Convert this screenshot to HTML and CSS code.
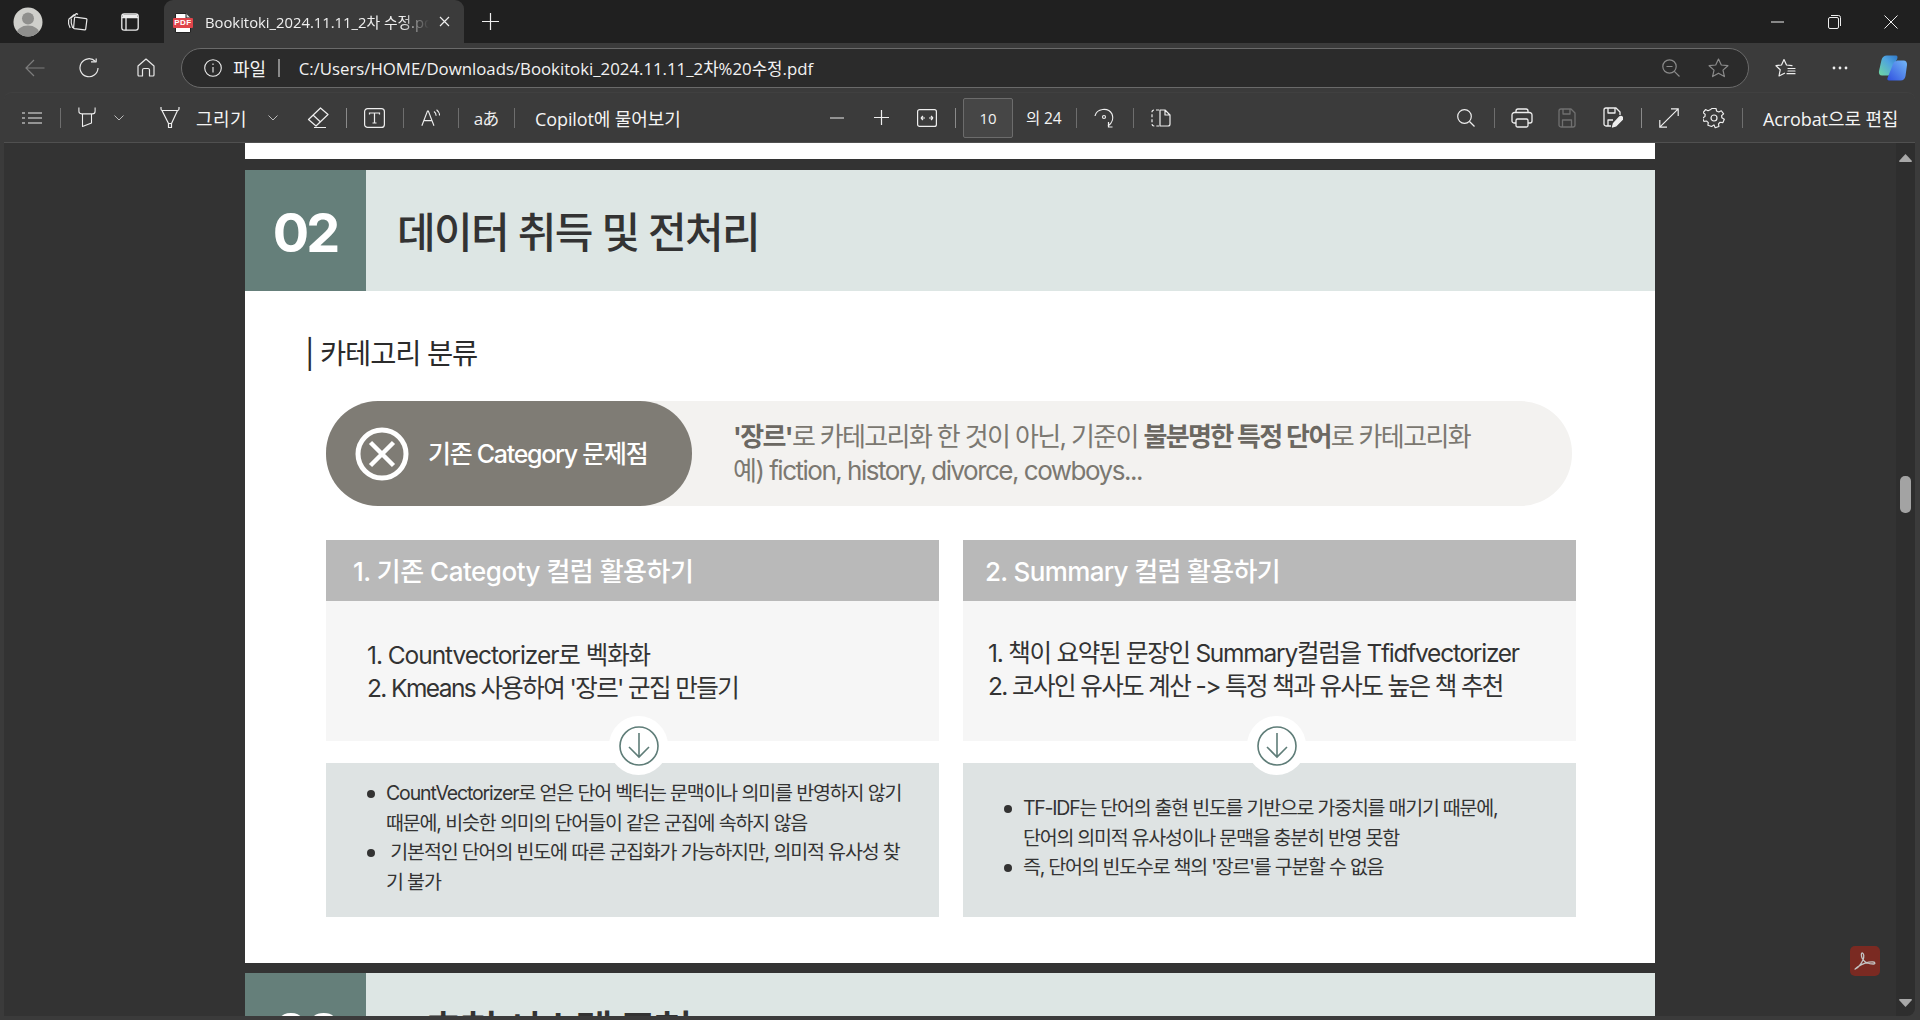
FILE: index.html
```html
<!DOCTYPE html>
<html lang="ko">
<head>
<meta charset="utf-8">
<title>Bookitoki_2024.11.11_2차 수정.pdf</title>
<link rel="stylesheet" href="styles.css">
</head>
<body>
<div class="window">
  <header class="tabstrip">
    <div class="slot s44 first-tabslot">
      <svg class="avatar" width="30" height="30" viewBox="0 0 30 30"><defs><clipPath id="av"><circle cx="15" cy="15" r="14.5"/></clipPath></defs><circle cx="15" cy="15" r="14.5" fill="#cfcfcb"/><g clip-path="url(#av)" fill="#8f8f8d"><circle cx="15" cy="11.5" r="6"/><ellipse cx="15" cy="27" rx="11.5" ry="8.5"/></g></svg>
    </div>
    <div class="slot s56">
      <svg width="22" height="22" viewBox="0 0 22 22" fill="none" stroke="#e8e8e8" stroke-width="1.2" stroke-linejoin="round"><path d="M4.5 6.5 9.5 2.5l1.5 1M1.5 8.5 7 3.8l1.5 1"/><path d="M1.6 8.6c-.5 3 .2 6 1.6 8.4M4.3 7.4c-.6 3.5 0 6.5 1.4 9.5"/><path d="M8.5 6.2l10.6 1.4c.6.1.9.6.8 1.1l-1.2 9.4c-.1.5-.6.9-1.1.8L7.4 17.7c-.5-.1-.9-.6-.8-1.1l.9-9.6c.1-.5.5-.9 1-.8z"/></svg>
    </div>
    <div class="slot s48">
      <svg width="18" height="18" viewBox="0 0 18 18" fill="none" stroke="#ececec" stroke-width="1.3"><rect x=".8" y=".8" width="16.4" height="16.4" rx="2.4"/><path d="M.8 4.6h16.4M5 4.6v12.6"/><path d="M1.5 1.5h15v3h-15z" fill="#ececec" stroke="none"/></svg>
    </div>
    <div class="tab">
      <svg class="pdf-icon" width="20" height="20" viewBox="0 0 20 20"><path d="M2.500.5h10.500l4.500 4.500v14.500h-15z" fill="#fff" stroke="#222" stroke-width="1"/><path d="M13 .5V5h4.500" fill="#ddd" stroke="#222" stroke-width="1"/><rect y="5" width="20" height="10" rx="1" fill="#e0444a"/></svg>
      <span class="pdf-mark">PDF</span>
      <span class="tab-title">Bookitoki_2024.11.11_2차 수정.pdf</span>
      <svg class="tab-close" width="11" height="11" viewBox="0 0 11 11" stroke="#eee" stroke-width="1.2"><path d="M1 1l9 9M10 1l-9 9"/></svg>
    </div>
    <div class="slot s52">
      <svg width="17" height="17" viewBox="0 0 17 17" stroke="#eee" stroke-width="1.2"><path d="M8.500 0v17M0 8.500h17"/></svg>
    </div>
    <div class="win-controls">
      <div class="slot s56"><svg width="13" height="2" viewBox="0 0 13 2" stroke="#eee" stroke-width="1"><path d="M0 1h13"/></svg></div>
      <div class="slot s56"><svg width="13" height="14" viewBox="0 0 13 14" fill="none" stroke="#eee" stroke-width="1"><rect x=".5" y="2.500" width="10" height="11" rx="1.500"/><path d="M3 .5h7.500a2 2 0 0 1 2 2V11"/></svg></div>
      <div class="slot s56"><svg width="14" height="14" viewBox="0 0 14 14" stroke="#eee" stroke-width="1"><path d="M.5.5l13 13M13.500.5l-13 13"/></svg></div>
    </div>
  </header>

  <div class="addressbar">
    <div class="slot s56">
      <svg width="20" height="18" viewBox="0 0 20 18" fill="none" stroke="#7d7d7d" stroke-width="1.2"><path d="M19.500 9H1M9 1 1 9l8 8"/></svg>
    </div>
    <div class="slot s52">
      <svg width="20" height="20" viewBox="0 0 20 20" fill="none" stroke="#e8e8e8" stroke-width="1.200"><path d="M16.500 3.500A9 9 0 1 0 19 10"/><path d="M12 3.800h5.200V.5" stroke-linejoin="round"/></svg>
    </div>
    <div class="slot s62">
      <svg width="18" height="19" viewBox="0 0 18 19" fill="none" stroke="#e8e8e8" stroke-width="1.200" stroke-linejoin="round"><path d="M1 8 9 1l8 7v9a1 1 0 0 1-1 1h-3.500v-6a1.500 1.500 0 0 0-1.500-1.500H7a1.500 1.500 0 0 0-1.500 1.500v6H2a1 1 0 0 1-1-1z"/></svg>
    </div>
    <div class="omnibox">
      <svg class="info" width="18" height="18" viewBox="0 0 18 18" fill="none" stroke="#eee" stroke-width="1.100"><circle cx="9" cy="9" r="8.300"/><path d="M9 8v5.500M9 4.500v1.400"/></svg>
      <span class="origin">파일</span>
      <span class="omni-sep"></span>
      <span class="url">C:/Users/HOME/Downloads/Bookitoki_2024.11.11_2차%20수정.pdf</span>
      <div class="omni-actions">
        <div class="slot s50">
          <svg width="18" height="18" viewBox="0 0 18 18" fill="none" stroke="#8a8a8a" stroke-width="1.200"><circle cx="7.500" cy="7.500" r="6.700"/><path d="M12.300 12.300l5.200 5.200M4.500 7.500h6"/></svg>
        </div>
        <div class="slot s44">
          <svg width="21" height="20" viewBox="0 0 21 20" fill="none" stroke="#8a8a8a" stroke-width="1.200" stroke-linejoin="round"><path d="M10.500 1l2.800 6 6.600.7-4.900 4.400 1.400 6.500-5.900-3.400-5.900 3.400 1.400-6.500L1.100 7.700l6.600-.7z"/></svg>
        </div>
      </div>
    </div>
    <div class="slot s44 ml14">
      <svg width="21" height="20" viewBox="0 0 21 20" fill="none" stroke="#eee" stroke-width="1.200" stroke-linejoin="round" stroke-linecap="round"><path d="M17 7.600 11.500 7 9 1.500 6.500 7 1 7.700l4.200 4.100L4 18l5.500-2.800"/><path d="M13 10.500h7M13 13h7M12 15.700h8"/></svg>
    </div>
    <div class="slot s44 ml11">
      <svg width="16" height="4" viewBox="0 0 16 4" fill="#eee"><circle cx="2" cy="2" r="1.400"/><circle cx="8" cy="2" r="1.400"/><circle cx="14" cy="2" r="1.400"/></svg>
    </div>
    <div class="slot s44 ml9">
      <svg width="30" height="30" viewBox="0 0 30 30"><defs><linearGradient id="cpA" x1="0" y1="1" x2="1" y2="0"><stop offset="0" stop-color="#6fd8a0"/><stop offset=".6" stop-color="#4fa3e0"/><stop offset="1" stop-color="#2f78c8"/></linearGradient><linearGradient id="cpB" x1="0" y1="1" x2="1" y2="0"><stop offset="0" stop-color="#2f50e0"/><stop offset="1" stop-color="#74b8f5"/></linearGradient></defs><path d="M9 2.500h9c1.500 0 1.800 1.500 1.300 3l-6 15c-.5 1.200-1.500 2-3 2H4c-2.500 0-3.500-2-3-4.500l2.500-11C4.300 4 6 2.500 9 2.500z" fill="url(#cpA)"/><path d="M19 7.500h6.500c2.500 0 3.800 2 3.500 4.500l-1.500 11c-.4 2.500-2 4.500-5 4.500H11c-1.500 0-2-1.200-1.500-2.500l6-15c.6-1.300 1.800-2 3.500-2z" fill="url(#cpB)"/></svg>
    </div>
  </div>

  <div class="pdfbar">
    <div class="bar-left">
      <div class="slot s44">
        <svg width="20" height="14" viewBox="0 0 20 14" stroke="#eee" stroke-width="1.200"><path d="M6 2h14M6 7h14M6 12h14M0 2h3M0 7h3M0 12h3"/></svg>
      </div>
      <span class="sep"></span>
      <div class="slot s42">
        <svg width="18" height="21" viewBox="0 0 20 22" fill="none" stroke="#eee" stroke-width="1.200" stroke-linejoin="round"><path d="M1 0v4c0 2 1 3 3 3h12c2 0 3-1 3-3V0M5 7v14l10-4V7"/></svg>
      </div>
      <div class="slot s22">
        <svg width="10" height="6" viewBox="0 0 10 6" fill="none" stroke="#bbb" stroke-width="1"><path d="M.5.5 5 5 9.500.5"/></svg>
      </div>
      <div class="slot s40 ml20">
        <svg width="20" height="22" viewBox="0 0 20 22" fill="none" stroke="#eee" stroke-width="1.200" stroke-linejoin="round"><path d="M1 0v2c0 1 .5 1.500 1.500 1.500h15c1 0 1.500-.5 1.500-1.500V0M2 3.500l6.500 13v4h3v-4l6-13M8.500 16.500h3"/></svg>
      </div>
      <span class="bar-text ml6 draw-label">그리기</span>
      <div class="slot s22 ml14">
        <svg width="10" height="6" viewBox="0 0 10 6" fill="none" stroke="#bbb" stroke-width="1"><path d="M.5.5 5 5 9.500.5"/></svg>
      </div>
      <div class="slot s44 ml12">
        <svg width="22" height="21" viewBox="0 0 22 21" fill="none" stroke="#eee" stroke-width="1.200" stroke-linejoin="round"><path d="M13.500 1 21 7.500 9 19l-7.500-6.500zM6 8l7.500 7M7 20.500h12"/></svg>
      </div>
      <span class="sep sep-strong"></span>
      <div class="slot s45">
        <svg width="21" height="20" viewBox="0 0 21 20" fill="none" stroke="#eee" stroke-width="1.200"><rect x=".6" y=".6" width="19.800" height="18.800" rx="3"/><path d="M5.500 6.500V5h10v1.500M10.500 5v10M8.500 15h4"/></svg>
      </div>
      <span class="sep"></span>
      <div class="slot s43">
        <svg width="19" height="18" viewBox="0 0 22 20" fill="none" stroke="#eee" stroke-width="1.300"><path d="M1 19 7.500 2h1L15 19M3.500 13h9.500"/><path d="M15 2.500c1.500 1 2.500 3 2.500 5M18 .5c2 1.500 3.500 4 3.500 6.500"/></svg>
      </div>
      <span class="sep"></span>
      <span class="slot s44 aa-label">aあ</span>
      <span class="sep"></span>
      <span class="bar-text ml15">Copilot에 물어보기</span>
    </div>

    <div class="bar-center">
      <div class="slot s44"><svg width="14" height="2" viewBox="0 0 14 2" stroke="#aaa" stroke-width="1.600"><path d="M0 1h14"/></svg></div>
      <div class="slot s44"><svg width="15" height="15" viewBox="0 0 15 15" stroke="#eee" stroke-width="1.200"><path d="M7.500 0v15M0 7.500h15"/></svg></div>
      <div class="slot s48">
        <svg width="20" height="18" viewBox="0 0 20 18" fill="none" stroke="#eee" stroke-width="1.200"><rect x=".6" y=".6" width="18.800" height="16.800" rx="2"/><path d="M4 9h4M4 9l2-2M4 9l2 2M16 9h-4M16 9l-2-2M16 9l-2 2"/></svg>
      </div>
      <span class="sep sep-narrow sep-strong"></span>
      <div class="page-box">10</div>
      <span class="bar-text page-total">의 24</span>
      <span class="sep ml9"></span>
      <div class="slot s44">
        <svg width="20" height="22" viewBox="0 0 20 22" fill="none" stroke="#eee" stroke-width="1.200"><path d="M1 9a9 8 0 0 1 17-2c1.500 4 .5 9-4 12"/><path d="M14.500 15v5h4"/><circle cx="10" cy="10" r="1.500"/></svg>
      </div>
      <span class="sep ml1"></span>
      <div class="slot s44">
        <svg width="20" height="18" viewBox="0 0 20 18" fill="none" stroke="#eee" stroke-width="1.200" stroke-linejoin="round"><path d="M8 1H3a2 2 0 0 0-2 2v12a2 2 0 0 0 2 2h5" stroke-dasharray="3 2"/><path d="M9 1h5l5 5v9a2 2 0 0 1-2 2H9zM14 1v5h5"/></svg>
      </div>
    </div>

    <div class="bar-right">
      <div class="slot s44">
        <svg width="18" height="18" viewBox="0 0 18 18" fill="none" stroke="#eee" stroke-width="1.200"><circle cx="7.500" cy="7.500" r="6.800"/><path d="M12.500 12.500l5 5"/></svg>
      </div>
      <span class="sep"></span>
      <div class="slot s44">
        <svg width="22" height="20" viewBox="0 0 22 20" fill="none" stroke="#eee" stroke-width="1.300" stroke-linejoin="round"><path d="M5 5V3a2 2 0 0 1 2-2h8a2 2 0 0 1 2 2v2"/><path d="M5 15H3a2 2 0 0 1-2-2V7a2.500 2.500 0 0 1 2.500-2.500h15A2.500 2.500 0 0 1 21 7v6a2 2 0 0 1-2 2h-2"/><rect x="5" y="11" width="12" height="8" rx="1.500"/></svg>
      </div>
      <div class="slot s44 ml1">
        <svg width="18" height="20" viewBox="0 0 18 20" fill="none" stroke="#707070" stroke-width="1.300" stroke-linejoin="round"><path d="M3 1h10l4 4v12a2 2 0 0 1-2 2H3a2 2 0 0 1-2-2V3a2 2 0 0 1 2-2z"/><path d="M5 1v5h7V1M4.500 19v-7h9v7"/></svg>
      </div>
      <div class="slot s44 ml2">
        <svg width="20" height="21" viewBox="0 0 20 21" fill="none" stroke="#eee" stroke-width="1.300" stroke-linejoin="round"><path d="M8 19H3a2 2 0 0 1-2-2V3a2 2 0 0 1 2-2h10l4 4v3"/><path d="M5 1v5h7V1M5 19v-6h5"/><path d="M9.500 20l1-3.500L16.500 10c.8-.8 2-.8 2.700 0 .7.700.7 1.900 0 2.600L13 18.800z" fill="#eee"/></svg>
      </div>
      <span class="sep sep-strong"></span>
      <div class="slot s44">
        <svg width="20" height="20" viewBox="0 0 20 20" fill="none" stroke="#eee" stroke-width="1.200"><path d="M.8 19.200 19.200.8M12 .8h7.200V8M.8 12v7.200H8"/></svg>
      </div>
      <div class="slot s44 ml1">
        <svg width="22" height="22" viewBox="0 0 22 22" fill="none" stroke="#eee" stroke-width="1.200" stroke-linejoin="round"><path d="M9 1h4l.6 2.800 2.200 1 2.500-1.300 2.300 3.200-2 2 .3 2.300 2.400 1.500-1.400 3.600-2.800-.4-1.600 1.700.4 2.800-3.700 1.300L11 18.500l-2.400 1.700-3.700-1.300.4-2.800-1.600-1.700-2.800.4L-.5 11.200 1.900 9.700l.3-2.300-2-2 2.300-3.200L5 3.500l2.200-1z" transform="translate(0 0.500) scale(1 .94)"/><circle cx="11" cy="11" r="3"/></svg>
      </div>
      <span class="sep"></span>
      <span class="bar-text ml15">Acrobat으로 편집</span>
    </div>
  </div>

  <div class="viewer">
    <main class="pages">
      <div class="page page-stub"></div>
      <section class="page page-main">
        <div class="sec-head">
          <div class="sec-num">02</div>
          <h1 class="sec-title">데이터 취득 및 전처리</h1>
        </div>
        <div class="sec-body">
          <h2 class="sub-title">| 카테고리 분류</h2>
          <div class="problem">
            <div class="problem-pill">
              <svg width="54" height="54" viewBox="0 0 54 54" fill="none" stroke="#fff"><circle cx="27" cy="27" r="24" stroke-width="5"/><path d="M15.500 15.500l23 23M38.500 15.500l-23 23" stroke-width="4.500"/></svg>
              <span class="pill-label">기존 Category 문제점</span>
            </div>
            <p class="problem-text"><b>'장르'</b>로 카테고리화 한 것이 아닌, 기준이 <b>불분명한 특정 단어</b>로 카테고리화<br><span class="loose">예) fiction, history, divorce, cowboys...</span></p>
          </div>
          <div class="columns">
            <article class="col">
              <h3 class="col-head"><span>1. 기존 Categoty 컬럼 활용하기</span></h3>
              <div class="col-main">
                <p><span class="loose">1. Countvectorizer로 벡화화</span><br><span class="tight">2. Kmeans 사용하여 '장르' 군집 만들기</span></p>
              </div>
              <div class="col-divider">
                <span class="down-badge">
                  <svg width="40" height="40" viewBox="0 0 40 40" fill="none" stroke="#5f7d78" stroke-width="1.600"><circle cx="20" cy="20" r="19"/><path d="M20 7v24M10 21l10 10 10-10"/></svg>
                </span>
              </div>
              <ul class="col-notes">
                <li>CountVectorizer로 얻은 단어 벡터는 문맥이나 의미를 반영하지 않기<br>때문에, 비슷한 의미의 단어들이 같은 군집에 속하지 않음</li>
                <li>&nbsp;기본적인 단어의 빈도에 따른 군집화가 가능하지만, 의미적 유사성 찾<br>기 불가</li>
              </ul>
            </article>
            <article class="col col-second">
              <h3 class="col-head"><span>2. Summary 컬럼 활용하기</span></h3>
              <div class="col-main">
                <p>1. 책이 요약된 문장인 Summary컬럼을 Tfidfvectorizer<br><span class="tight">2. 코사인 유사도 계산 -&gt; 특정 책과 유사도 높은 책 추천</span></p>
              </div>
              <div class="col-divider">
                <span class="down-badge">
                  <svg width="40" height="40" viewBox="0 0 40 40" fill="none" stroke="#5f7d78" stroke-width="1.600"><circle cx="20" cy="20" r="19"/><path d="M20 7v24M10 21l10 10 10-10"/></svg>
                </span>
              </div>
              <ul class="col-notes">
                <li>TF-IDF는 단어의 출현 빈도를 기반으로 가중치를 매기기 때문에,<br>단어의 의미적 유사성이나 문맥을 충분히 반영 못함</li>
                <li>즉, 단어의 빈도수로 책의 '장르'를 구분할 수 없음</li>
              </ul>
            </article>
          </div>
        </div>
      </section>
      <section class="page">
        <div class="sec-head sec-next">
          <div class="sec-num">03</div>
          <h1 class="sec-title">추천 시스템 구현</h1>
        </div>
      </section>
    </main>
    <aside class="scrollbar">
      <svg width="13" height="8" viewBox="0 0 13 8" fill="#a8a8a8"><path d="M6.500 0 13 7a1 1 0 0 1-1 1H1a1 1 0 0 1-1-1z"/></svg>
      <div class="scroll-thumb"></div>
      <svg width="13" height="8" viewBox="0 0 13 8" fill="#a8a8a8"><path d="M6.500 8 13 1a1 1 0 0 0-1-1H1a1 1 0 0 0-1 1z"/></svg>
    </aside>
    <div class="acrobat-badge">
      <svg width="22" height="20" viewBox="0 0 22 20" fill="none" stroke="#c4c4c4" stroke-width="1.300" stroke-linejoin="round"><path d="M1 18c3-1 6-5 8-9 1-3 1-6-.5-7-1.500-.5-1.500 3 0 6 2 3 6 5 11 5 2 0 1.500-2 0-2-5-.5-12 2-16 5-2 2-2.500 2-2.500 2z"/></svg>
    </div>
  </div>
</div>
</body>
</html>
```
FILE: styles.css
```css
* { box-sizing: border-box; }
html, body { margin: 0; height: 100%; overflow: hidden; background: #3b3b3b; }
body { font-family: "Open Sans", "Noto Sans CJK KR", sans-serif; color: #f2f2f2; }
.window { width: 1920px; height: 1020px; display: flex; flex-direction: column; background: #3b3b3b; }

.slot { display: flex; align-items: center; justify-content: center; flex: none; }
.s22 { width: 22px; } .s40 { width: 40px; } .s42 { width: 42px; } .s43 { width: 43px; }
.s44 { width: 44px; } .s45 { width: 45px; } .s48 { width: 48px; } .s50 { width: 50px; }
.s52 { width: 52px; } .s56 { width: 56px; } .s62 { width: 62px; }
.ml1 { margin-left: 1px; } .ml2 { margin-left: 2px; } .ml6 { margin-left: 6px; } .ml9 { margin-left: 9px; }
.ml11 { margin-left: 11px; } .ml12 { margin-left: 12px; } .ml14 { margin-left: 14px; }
.ml15 { margin-left: 15px; } .ml20 { margin-left: 20px; }

/* tab strip */
.tabstrip { height: 43px; flex: none; display: flex; align-items: center; padding-left: 6px; padding-right: 1px; background: #202020; }
.avatar { display: block; }
.tab { position: relative; align-self: flex-end; width: 300px; height: 43px; margin-left: 10px; padding-left: 9px; display: flex; align-items: center; background: #3b3b3b; border-radius: 9px 9px 0 0; }
.pdf-icon { flex: none; margin-top: 3px; }
.pdf-mark { position: absolute; left: 9px; top: 18px; width: 20px; text-align: center; font: 700 8px/10px "Liberation Sans", sans-serif; letter-spacing: .5px; color: #fff; }
.tab-title { width: 224px; margin-left: 12px; overflow: hidden; white-space: nowrap; font-size: 14.8px; color: #f0f0f0; -webkit-mask-image: linear-gradient(90deg, #000 88%, transparent); mask-image: linear-gradient(90deg, #000 88%, transparent); }
.tab-close { margin-left: 10px; flex: none; }
.win-controls { margin-left: auto; display: flex; gap: 1px; }

/* address bar */
.addressbar { height: 49px; flex: none; display: flex; align-items: center; padding-left: 7px; }
.omnibox { width: 1568px; height: 40px; margin-left: 4px; display: flex; align-items: center; padding-left: 22px; padding-right: 8px; flex: none; background: #2b2b2b; border: 1.5px solid #6a6a6a; border-radius: 20px; }
.info { flex: none; }
.origin { margin-left: 11px; font-size: 18px; color: #f2f2f2; }
.omni-sep { width: 1.5px; height: 18px; margin-left: 12px; background: #8a8a8a; }
.url { margin-left: 19px; font-size: 16.8px; white-space: nowrap; color: #f2f2f2; }
.omni-actions { margin-left: auto; display: flex; }

/* pdf toolbar */
.pdfbar { height: 51px; flex: none; margin: 0 5px 0 4px; display: flex; align-items: center; background: #3b3b3b; border-radius: 8px 8px 0 0; border-bottom: 1px solid #505050; border-top: 1px solid #404040; }
.pdfbar .slot { height: 40px; }
.bar-left { width: 811px; flex: none; display: flex; align-items: center; padding-left: 6px; }
.bar-center { width: 629px; flex: none; display: flex; align-items: center; }
.bar-right { flex: 1; display: flex; align-items: center; }
.bar-text { font-size: 18px; letter-spacing: -0.1px; white-space: nowrap; color: #f4f4f4; }
.draw-label { width: 52px; letter-spacing: .4px; }
.aa-label { font-size: 17px; letter-spacing: -1px; color: #eee; }
.sep { display: block; flex: none; width: 12px; height: 20px; position: relative; }
.sep::after { content: ""; position: absolute; left: 5.5px; top: 0; width: 1px; height: 100%; background: #6e6e6e; }
.sep-strong::after { width: 1.5px; background: #8a8a8a; }
.sep-narrow { width: 8px; }
.sep-narrow::after { left: 3.5px; }
.page-box { width: 50px; height: 40px; margin-left: 4px; display: flex; align-items: center; justify-content: center; flex: none; font-size: 15px; color: #f2f2f2; background: #464646; border: 1px solid #6c6c6c; border-radius: 2px; }
.page-total { margin-left: 13px; font-size: 15.5px; width: 35px; }

/* viewer */
.viewer { position: relative; flex: 1; min-height: 0; display: flex; padding: 0 5px 4px 4px; }
.pages { flex: 1; min-width: 0; overflow: hidden; display: flex; flex-direction: column; align-items: center; gap: 11px; background: #333; }
.page { width: 1410px; flex: none; background: #fff; font-family: "Inter", "Noto Sans CJK KR", sans-serif; color: #333; }
.page-stub { height: 16px; }
.page-main { height: 793px; margin-bottom: -1px; }
.sec-head { height: 121px; display: flex; align-items: center; background: #dde6e4; }
.sec-num { width: 121px; height: 100%; flex: none; display: flex; align-items: center; justify-content: center; padding: 4px 1px 0 0; font-size: 54px; font-weight: 700; color: #fff; letter-spacing: -3px; background: #657f7a; }
.sec-title { margin: -3px 0 0 31px; font-size: 42px; font-weight: 500; letter-spacing: -1.6px; color: #333; }
.sec-next .sec-num { padding: 0 0 2px; }
.sec-next .sec-title { margin: -13px 0 0 58px; letter-spacing: -3px; }
.sec-body { padding: 43px 0 0 60px; }
.sub-title { margin: 0; font-size: 28.5px; line-height: 40px; font-weight: 400; letter-spacing: -1.2px; color: #2b2b2b; }

.problem { width: 1246px; height: 105px; margin: 27px 0 0 21px; display: flex; align-items: center; background: #f3f2f0; border-radius: 52px; }
.problem-pill { width: 366px; height: 105px; flex: none; display: flex; align-items: center; padding-left: 29px; gap: 19px; background: #7f7c75; border-radius: 52px; font-size: 25px; font-weight: 500; letter-spacing: -1.3px; color: #fff; }
.pill-label { margin-bottom: 4px; }
.problem-text { margin: 0 0 0 41px; font-size: 26px; line-height: 34px; letter-spacing: -1.65px; color: #7b7871; white-space: nowrap; }
.problem-text b { font-weight: 700; color: #6b6862; }
.problem-text .loose { letter-spacing: -1.5px; }

.columns { width: 1250px; margin: 34px 0 0 21px; display: flex; justify-content: space-between; }
.col { width: 613px; }
.col-head { margin: 0; height: 61px; padding: 0 0 2px 27px; display: flex; align-items: center; background: #b9b9b9; font-size: 26px; font-weight: 500; letter-spacing: -0.5px; color: #fff; white-space: nowrap; }
.col-main { height: 140px; padding: 38px 0 0 41px; background: #f6f6f6; }
.col-main p { margin: 0; font-size: 24.5px; line-height: 32.5px; letter-spacing: -1.25px; color: #333; white-space: nowrap; }
.col-main .loose { letter-spacing: -1.05px; }
.col-main .tight { letter-spacing: -1.6px; }
.col-second .col-head { padding-left: 22px; letter-spacing: -0.65px; }
.col-second .col-main { padding-left: 25px; padding-top: 36px; }
.col-divider { position: relative; height: 22px; }
.down-badge { position: absolute; left: 283px; top: -25px; width: 59px; height: 59px; display: flex; align-items: center; justify-content: center; background: #fff; border-radius: 50%; z-index: 1; }
.col-second .down-badge { left: 284px; }
.col-notes { margin: 0; height: 154px; padding: 16px 0 0 60px; background: #dee3e3; list-style: none; font-size: 19.5px; line-height: 29.5px; letter-spacing: -1.15px; color: #333; white-space: nowrap; }
.col-notes li { position: relative; }
.col-notes li::before { content: ""; position: absolute; left: -19px; top: 11px; width: 8px; height: 8px; border-radius: 50%; background: #333; }
.col-second .col-notes { padding: 31px 0 0 60px; letter-spacing: -1.25px; }

/* scrollbar + badge */
.scrollbar { width: 19px; flex: none; position: relative; background: #2e2e2e; display: flex; flex-direction: column; align-items: center; justify-content: space-between; padding: 11px 0 9px; border-radius: 0 0 8px 0; }
.scroll-thumb { position: absolute; left: 4px; top: 333px; width: 11px; height: 37px; border-radius: 5px; background: #a3a3a3; }
.acrobat-badge { position: absolute; left: 1850px; top: 803px; width: 30px; height: 30px; display: flex; align-items: center; justify-content: center; border-radius: 5px; background: #7a2a22; }
```
